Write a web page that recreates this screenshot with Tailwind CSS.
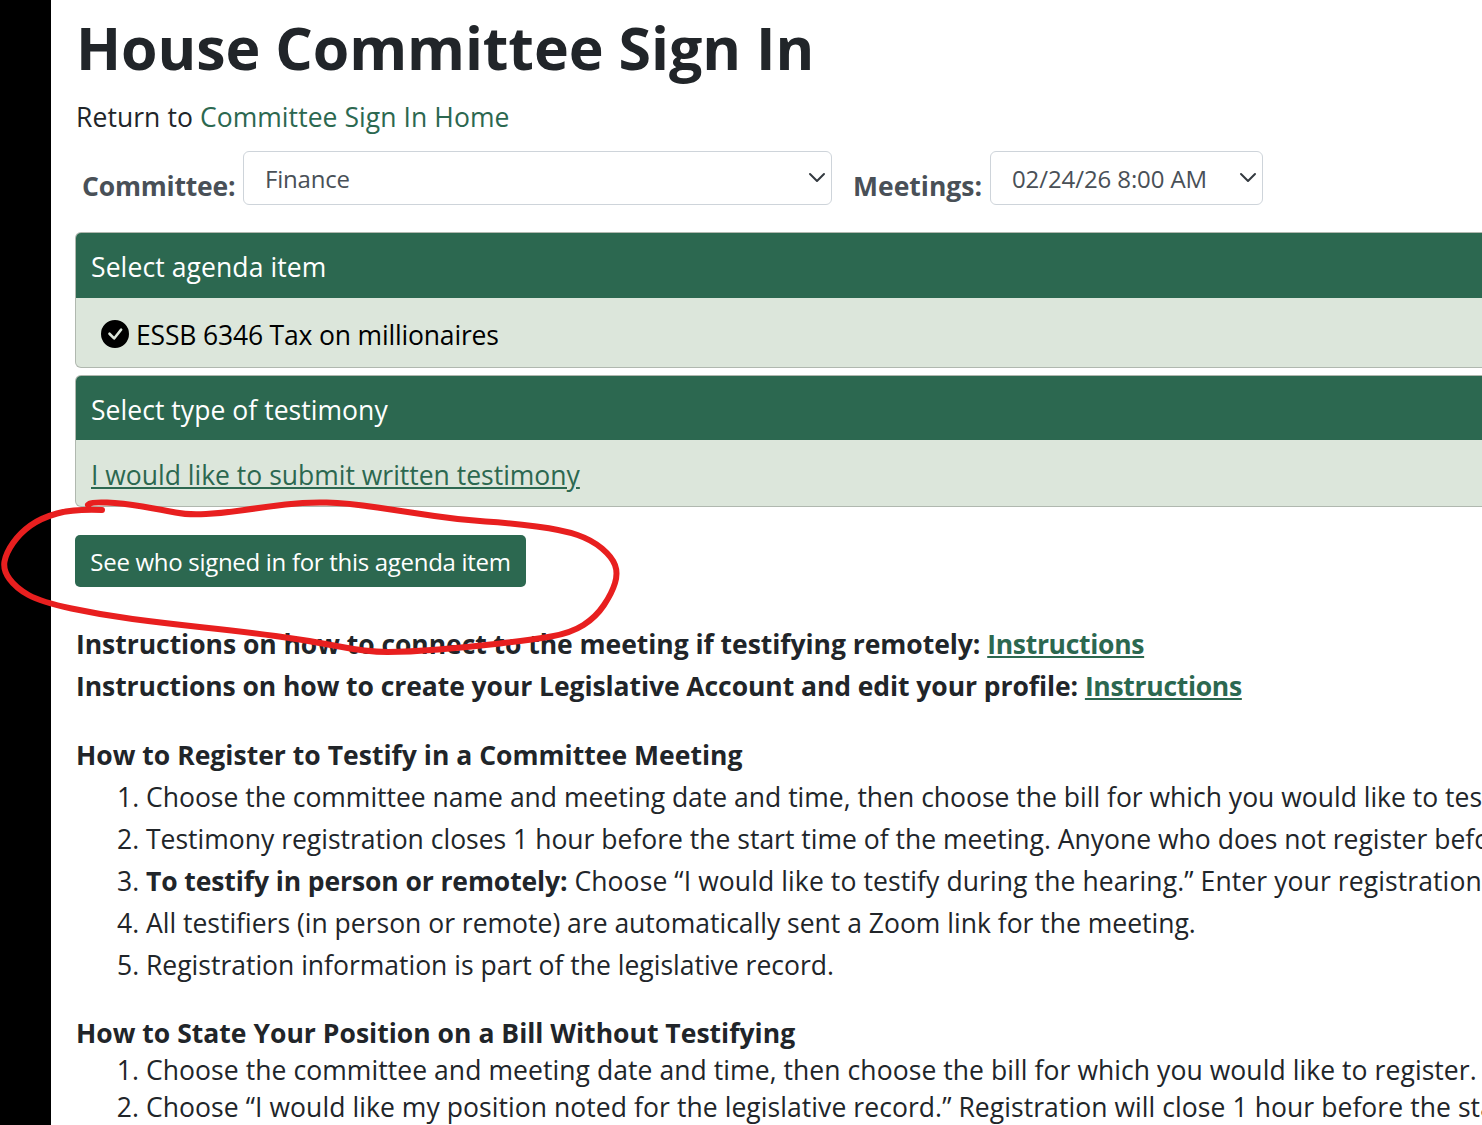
<!DOCTYPE html>
<html lang="en">
<head>
  <meta charset="UTF-8" />
  <title>House Committee Sign In</title>
  <script src="https://cdn.jsdelivr.net/npm/@tailwindcss/browser@4"></script>
</head>
<body class="bg-white overflow-hidden h-[1125px] font-['Open_Sans','Noto_Sans',sans-serif] text-[#212529]">
<div class="relative flex h-[1125px] w-[1482px] overflow-hidden">
  <div class="w-[51px] shrink-0 bg-black"></div>

  <main class="pl-6 w-[1700px] shrink-0 whitespace-nowrap text-[26.5px] leading-[42px]">
    <h1 class="pt-[5px] h-[85px] text-[59px] leading-[84px] font-bold pl-[1px] tracking-[-0.1px]">House Committee Sign In</h1>
    <p class="mt-[11px] pl-[1px] h-[42px] tracking-[0.07px]">Return to <a href="#" class="text-[#2c6850]">Committee Sign In Home</a></p>

    <form class="mt-[13px] flex items-start">
      <label class="pl-[7px] pt-[14px] w-[168px] font-bold text-[#495057] tracking-[-0.2px]">Committee:</label>
      <div class="relative w-[589px]">
        <select class="appearance-none w-full h-[54px] pl-[21px] pt-[2px] bg-white border border-[#ced4da] rounded-[6px] text-[24px] text-[#495057] tracking-[-0.2px]"><option>Finance</option></select>
        <svg class="absolute right-[6px] top-[19px] w-[18px] h-[14px]" viewBox="0 0 18 14" fill="none" stroke="#343a40" stroke-width="2" stroke-linecap="round" stroke-linejoin="round"><path d="M2 4l7 7 7-7"/></svg>
      </div>
      <label class="ml-[21px] pt-[14px] w-[137px] font-bold text-[#495057]">Meetings:</label>
      <div class="relative w-[273px]">
        <select class="appearance-none w-full h-[54px] pl-[21px] pt-[2px] bg-white border border-[#ced4da] rounded-[6px] text-[24px] text-[#495057] tracking-[-0.1px]"><option>02/24/26 8:00 AM</option></select>
        <svg class="absolute right-[6px] top-[19px] w-[18px] h-[14px]" viewBox="0 0 18 14" fill="none" stroke="#343a40" stroke-width="2" stroke-linecap="round" stroke-linejoin="round"><path d="M2 4l7 7 7-7"/></svg>
      </div>
    </form>

    <section class="mt-[25px] border border-black/20 rounded-[6px] overflow-hidden h-[136px] bg-[#dce6db]">
      <div class="bg-[#2c6850] text-white h-[65px] px-[15px] pt-[13px] tracking-[0.1px]">Select agenda item</div>
      <div class="pl-[25px] pt-[16px] flex items-center gap-[7px] text-black">
        <svg class="w-[28px] h-[28px] -mt-[3px]" viewBox="0 0 16 16" fill="#000"><path d="M16 8A8 8 0 1 1 0 8a8 8 0 0 1 16 0zm-3.97-3.03a.75.75 0 0 0-1.08.02L7.48 9.42 5.38 7.3a.75.75 0 0 0-1.06 1.06l2.65 2.66a.75.75 0 0 0 1.08-.02l4-5a.75.75 0 0 0-.02-1.03z"/></svg>
        <span class="tracking-[-0.17px]">ESSB 6346 Tax on millionaires</span>
      </div>
    </section>

    <section class="mt-[7px] border border-black/20 rounded-[6px] overflow-hidden h-[132px] bg-[#dce6db]">
      <div class="bg-[#2c6850] text-white h-[64px] px-[15px] pt-[13px] tracking-[0.05px]">Select type of testimony</div>
      <div class="px-[15px] pt-[14px]"><a href="#" class="text-[#2c6850] underline">I would like to submit written testimony</a></div>
    </section>

    <button type="button" class="mt-[28px] block h-[52px] w-[451px] pt-[2px] bg-[#2c6850] text-white rounded-[5px] text-[24px] tracking-[-0.3px] text-center">See who signed in for this agenda item</button>

    <div class="mt-[36px] pl-[1px] font-bold">
      <p class="tracking-[-0.04px]">Instructions on how to connect to the meeting if testifying remotely: <a href="#" class="text-[#2c6850] underline tracking-[-0.3px]">Instructions</a></p>
      <p class="tracking-[-0.07px]">Instructions on how to create your Legislative Account and edit your profile: <a href="#" class="text-[#2c6850] underline tracking-[-0.3px]">Instructions</a></p>
    </div>

    <h2 class="mt-[27px] pl-[1px] font-bold tracking-[0.02px]">How to Register to Testify in a Committee Meeting</h2>
    <ol class="list-decimal pl-[71px]">
      <li>Choose the committee name and meeting date and time, then choose the bill for which you would like to testify.</li>
      <li>Testimony registration closes 1 hour before the start time of the meeting. Anyone who does not register before the deadline.</li>
      <li><b class="tracking-[-0.1px]">To testify in person or remotely:</b> <span class="tracking-[0.1px]">Choose “I would like to testify during the hearing.” Enter your registration information.</span></li>
      <li>All testifiers (in person or remote) are automatically sent a Zoom link for the meeting.</li>
      <li>Registration information is part of the legislative record.</li>
    </ol>

    <h2 class="mt-[26px] h-[40px] pl-[1px] font-bold tracking-[0.02px]">How to State Your Position on a Bill Without Testifying</h2>
    <ol class="list-decimal pl-[71px] leading-[37px] tracking-[0.07px]">
      <li>Choose the committee and meeting date and time, then choose the bill for which you would like to register.</li>
      <li>Choose “I would like my position noted for the legislative record.” Registration will close 1 hour before the start time.</li>
    </ol>
  </main>

  <!-- hand drawn circle around the button -->
  <svg class="absolute left-0 top-0 w-[1482px] h-[1125px] pointer-events-none" viewBox="0 0 1482 1125" fill="none">
    <path id="scribble" stroke="#e81f1f" stroke-width="6" stroke-linecap="round" stroke-linejoin="round"/>
  </svg>
</div>
<script>
  const pts = [[102,510],[73,509],[41,518],[20,533],[6,553],[3,570],[16,588],[41,602],[102,615],[163,623],[245,632],[306,640],[367,652],[408,652],[469,647],[531,640],[571,633],[596,617],[612,593],[618,573],[612,557],[592,540],[563,530],[510,523],[461,520],[408,512],[347,503],[306,502],[265,507],[224,513],[188,515],[163,510],[122,503],[92,502],[88,505]];
  let d = 'M' + pts[0].join(' ');
  for (let i = 1; i < pts.length - 1; i++) {
    const mx = (pts[i][0] + pts[i + 1][0]) / 2, my = (pts[i][1] + pts[i + 1][1]) / 2;
    d += ` Q${pts[i][0]} ${pts[i][1]} ${mx} ${my}`;
  }
  d += ' L' + pts[pts.length - 1].join(' ');
  document.getElementById('scribble').setAttribute('d', d);
</script>
</body>
</html>
